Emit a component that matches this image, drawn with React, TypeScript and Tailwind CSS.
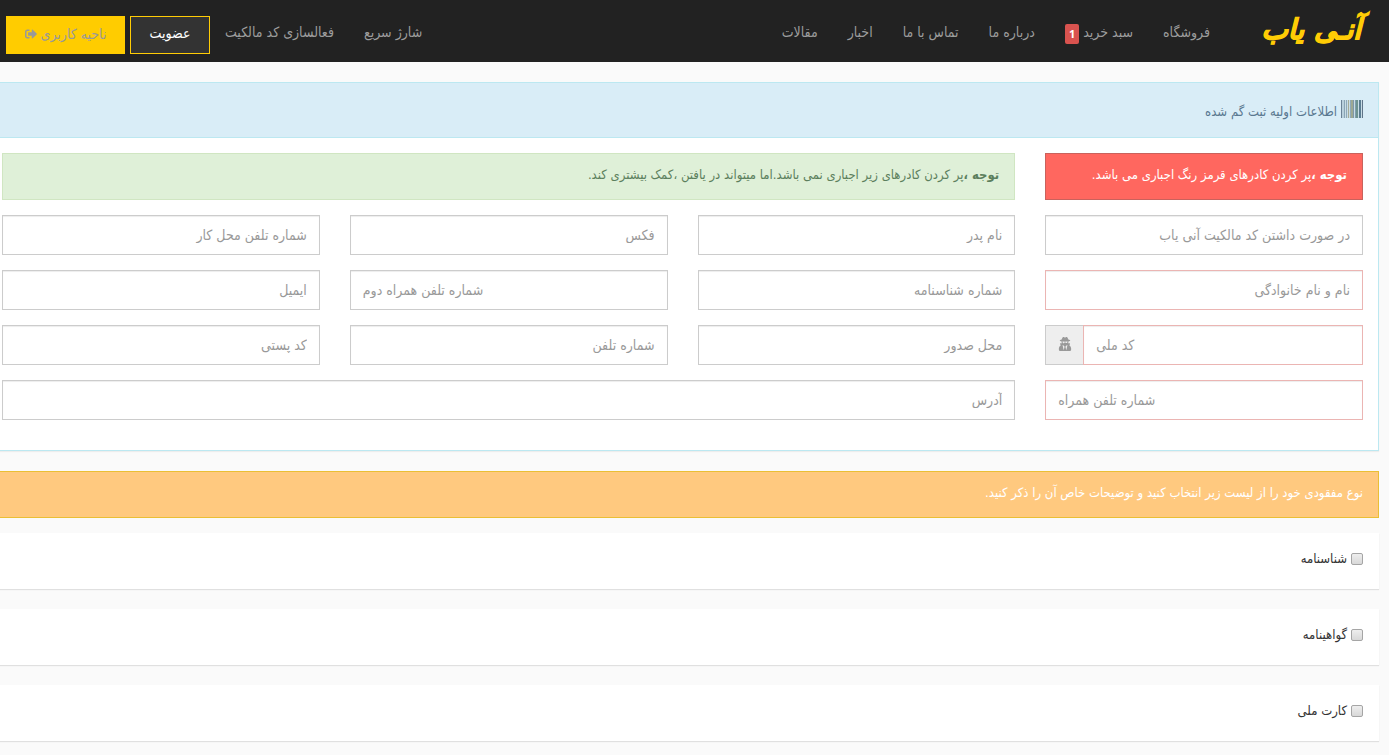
import { FaSignOutAlt, FaUserSecret } from 'react-icons/fa'

type FieldProps = {
  id: string
  label: string
  required?: boolean
  left?: boolean
}

const mainLinks = ['درباره ما', 'تماس با ما', 'اخبار', 'مقالات']
const items = ['شناسنامه', 'گواهینامه', 'کارت ملی']

const optionalFields: FieldProps[] = [
  { id: 'father', label: 'نام پدر' },
  { id: 'fax', label: 'فکس' },
  { id: 'work-phone', label: 'شماره تلفن محل کار' },
  { id: 'id-number', label: 'شماره شناسنامه' },
  { id: 'mobile-2', label: 'شماره تلفن همراه دوم', left: true },
  { id: 'email', label: 'ایمیل' },
  { id: 'issue-place', label: 'محل صدور' },
  { id: 'phone', label: 'شماره تلفن' },
  { id: 'postal-code', label: 'کد پستی' },
]

function Field({ id, label, required, left }: FieldProps) {
  return (
    <input
      id={id}
      type="text"
      aria-label={label}
      placeholder={label}
      className={`h-10 w-full min-w-0 border bg-white px-3 text-sm shadow-[inset_0_1px_1px_rgba(0,0,0,0.075)] placeholder:text-[#999] ${
        required ? 'border-[#ebb5b3]' : 'border-[#ccc]'
      } ${left ? 'text-left' : 'text-right'}`}
    />
  )
}

function NavLink({ children }: { children: React.ReactNode }) {
  return (
    <a href="#" className="flex items-center gap-1 px-[15px] text-[#9d9d9d]">
      {children}
    </a>
  )
}

function Barcode() {
  const bars = [
    [0, 1, '#6b8296'], [1, 2, '#b9d0dc'], [3, 1, '#8aa5b5'], [5, 1, '#8fa9b8'], [7, 1, '#a5ab98'],
    [9, 1, '#8fa9b8'], [10, 2, '#9da893'], [12, 1, '#7e97a8'], [14, 1, '#7f9fae'], [15, 2, '#6d9290'],
    [18, 2, '#5b7d92'], [21, 1, '#5f7488'],
  ] as const
  return (
    <svg width="22" height="18" viewBox="0 0 22 18" className="mb-1" aria-hidden="true">
      <rect width="22" height="18" fill="#c9dde6" />
      {bars.map(([x, w, fill]) => (
        <rect key={x} x={x} width={w} height="18" fill={fill} />
      ))}
    </svg>
  )
}

export default function App() {
  return (
    <div dir="rtl" className="min-h-screen overflow-x-hidden bg-[#fafafa] font-['DejaVu_Sans_Condensed','DejaVu_Sans',sans-serif] text-sm text-[#333]">
      <nav className="flex h-[62px] items-start justify-between bg-[#222] pl-1.5 pr-7">
        <div className="flex">
          <a href="#" className="ml-6 w-28 whitespace-nowrap pt-3 font-['DejaVu_Sans',sans-serif] text-[28px] font-bold italic leading-9 text-[#ffcc05] [-webkit-text-stroke:1px_#ffcc05]">
            آنـی یاب
          </a>
          <div className="flex h-16 items-center">
            <NavLink>فروشگاه</NavLink>
            <NavLink>
              سبد خرید
              <span className="mt-1 rounded-xs bg-[#d9534f] px-1 font-['Open_Sans',sans-serif] text-[11px] font-bold leading-5 text-white">1</span>
            </NavLink>
            {mainLinks.map((link) => (
              <NavLink key={link}>{link}</NavLink>
            ))}
          </div>
        </div>
        <div className="flex">
          <div className="flex h-16 items-center">
            <NavLink>شارژ سریع</NavLink>
            <NavLink>فعالسازی کد مالکیت</NavLink>
          </div>
          <div className="mt-4 flex gap-[5px]">
            <button type="button" className="h-[38px] w-20 border border-[#ffcc05] bg-[#333] pb-1 text-white">
              عضویت
            </button>
            <button type="button" className="flex h-[38px] w-[119px] items-center justify-center gap-1 bg-[#fc0] pb-0.5 text-[#999]">
              ناحیه کاربری
              <FaSignOutAlt size={12} />
            </button>
          </div>
        </div>
      </nav>

      <main className="-ml-3.5 mr-2.5 pt-5">
        <section className="border border-[#bce8f1] bg-white shadow-[0_1px_1px_rgba(0,0,0,0.05)]">
          <h1 className="flex h-[55px] items-end gap-1 border-b border-[#bce8f1] bg-[#d9edf7] px-[15px] pb-[15px] text-[13px] leading-5 text-[#5a7890]">
            <Barcode />
            اطلاعات اولیه ثبت گم شده
          </h1>
          <form className="grid grid-cols-4 gap-x-[30px] px-[15px] pb-[30px] pt-[15px]">
            <div className="flex flex-col gap-[15px]">
              <p className="flex h-[47px] items-center border border-[#c9625c] bg-[#ff675f] px-[15px] pb-0.5 text-[13px] text-white">
                <span><strong>توجه ،</strong>پر کردن کادرهای قرمز رنگ اجباری می باشد.</span>
              </p>
              <Field id="owner-code" label="در صورت داشتن کد مالکیت آنی یاب" />
              <Field id="name" label="نام و نام خانوادگی" required />
              <div className="flex">
                <Field id="national-code" label="کد ملی" required left />
                <span className="flex w-[38px] shrink-0 items-center justify-center border border-r-0 border-[#ccc] bg-[#eee] pb-0.5 text-[#999]">
                  <FaUserSecret size={14} />
                </span>
              </div>
              <Field id="mobile" label="شماره تلفن همراه" required left />
            </div>
            <div className="col-span-3 flex flex-col gap-[15px]">
              <p className="flex h-[47px] items-center border border-[#d0e6c2] bg-[#dff0d8] px-[15px] pb-0.5 text-[13px] text-[#5c7f5d]">
                <span><strong>توجه ،</strong>پر کردن کادرهای زیر اجباری نمی باشد.اما میتواند در یافتن ،کمک بیشتری کند.</span>
              </p>
              <div className="grid grid-cols-3 gap-x-[30px] gap-y-[15px]">
                {optionalFields.map((field) => (
                  <Field key={field.id} {...field} />
                ))}
              </div>
              <Field id="address" label="آدرس" />
            </div>
          </form>
        </section>

        <p className="mb-[15px] mt-5 flex h-[47px] items-center border border-[#eabf35] bg-[#ffc97f] px-[15px] pb-0.5 text-[13px] text-white">
          نوع مفقودی خود را از لیست زیر انتخاب کنید و توضیحات خاص آن را ذکر کنید.
        </p>

        <div className="flex flex-col gap-5">
          {items.map((item) => (
            <div key={item} className="flex h-14 items-center bg-white px-4 pb-1 shadow-[0_1px_1px_rgba(0,0,0,0.1)]">
              <label className="flex items-center gap-1 text-[13px]">
                <input
                  type="checkbox"
                  className="size-3 appearance-none rounded-xs border border-[#a5a5a5] bg-linear-to-b from-[#eee] to-[#d8d8d8]"
                />
                {item}
              </label>
            </div>
          ))}
        </div>
      </main>
    </div>
  )
}
